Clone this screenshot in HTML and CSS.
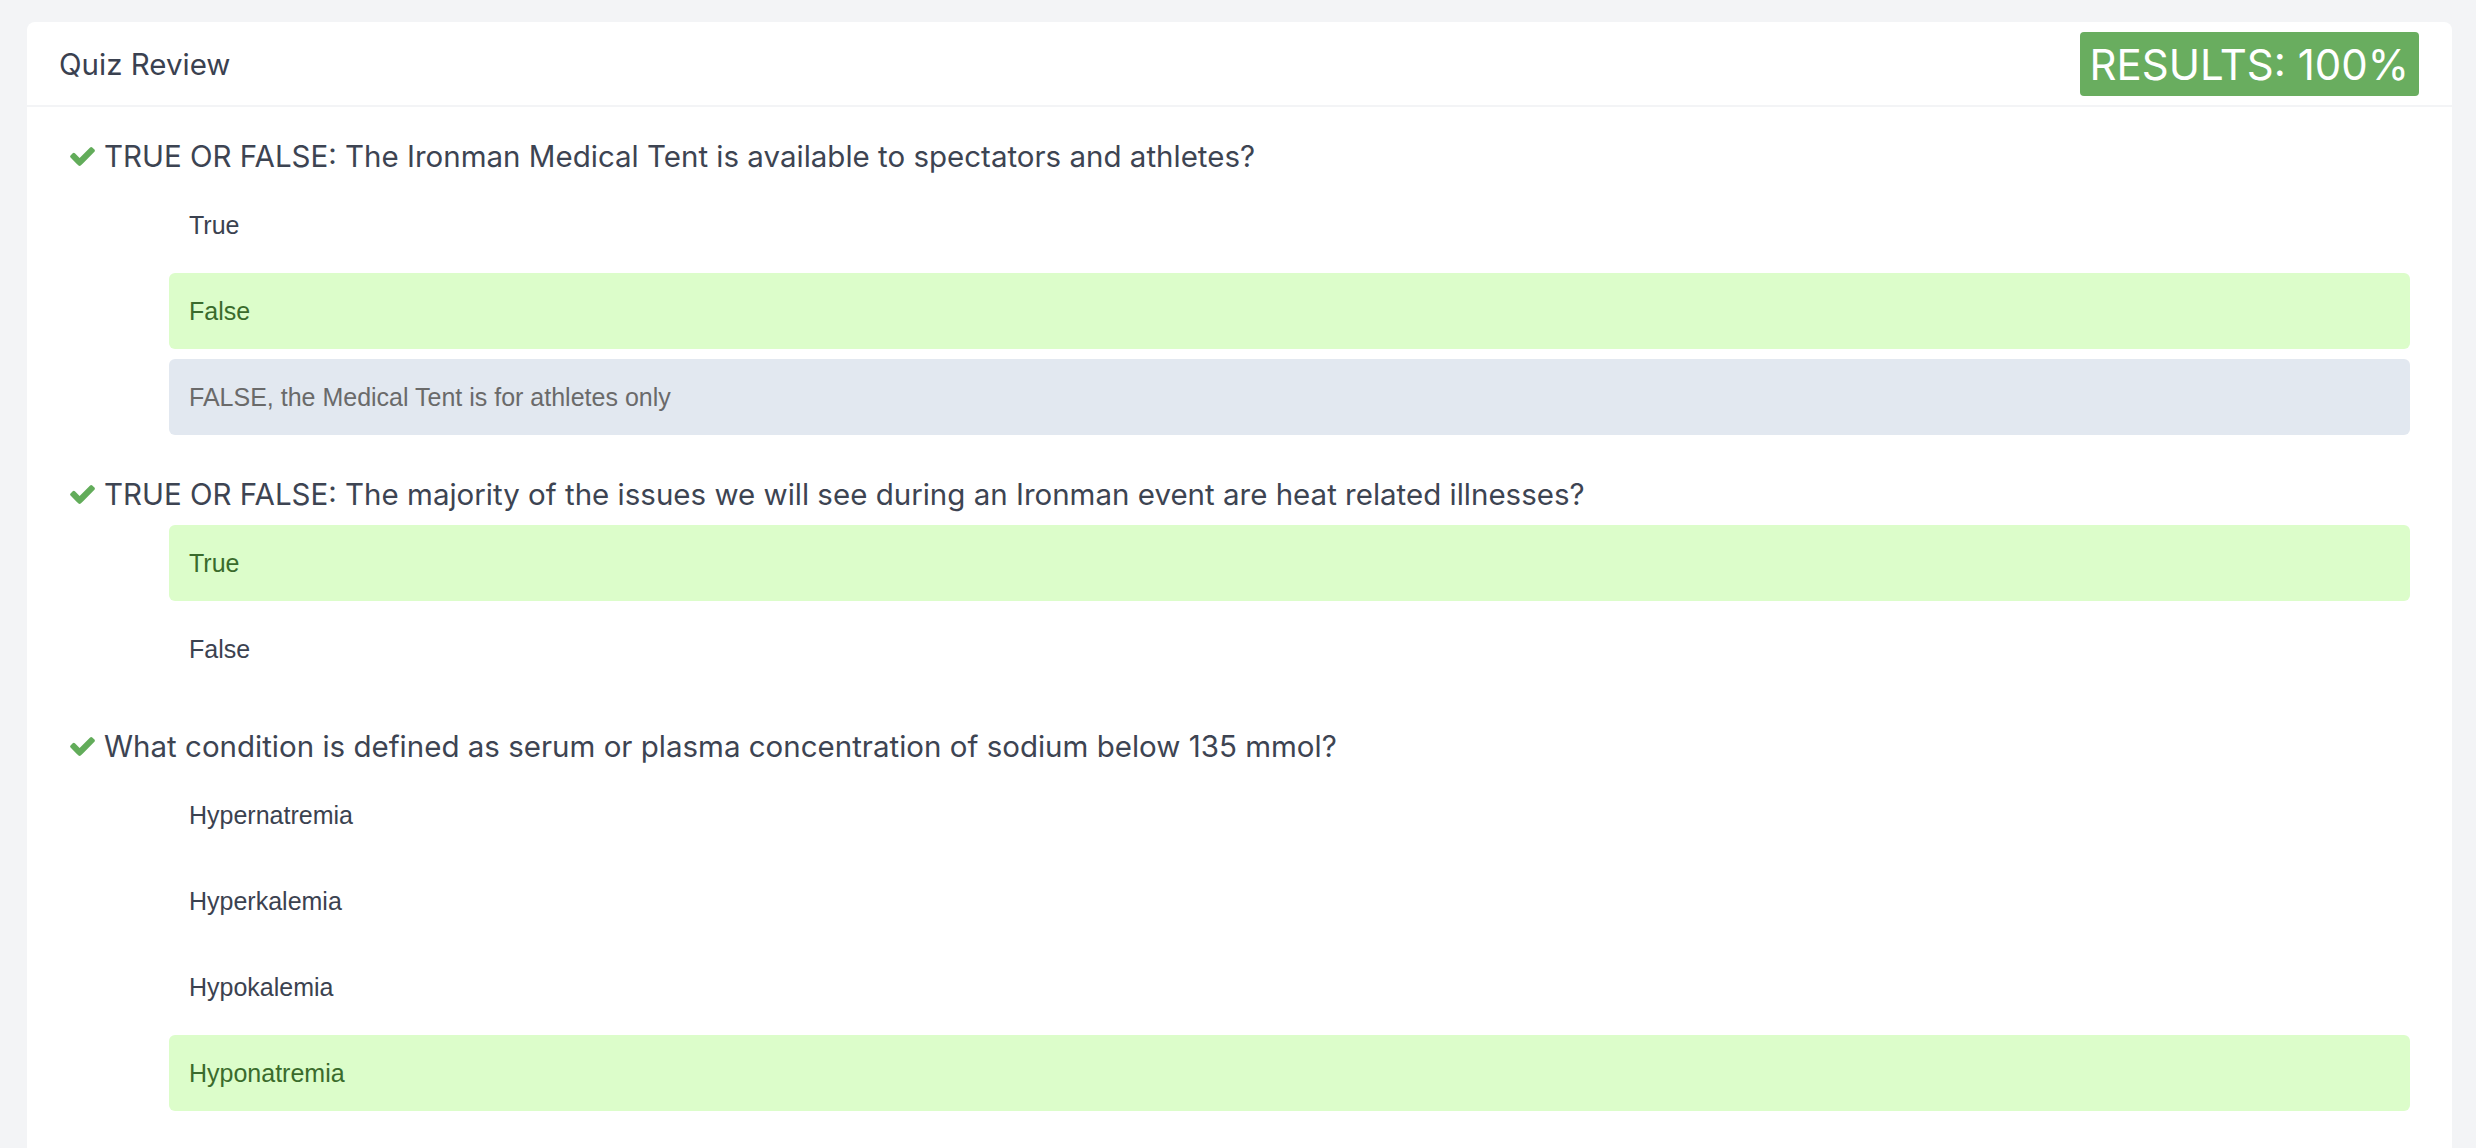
FILE: index.html
```html
<!DOCTYPE html>
<html lang="en">
<head>
<meta charset="utf-8">
<title>Quiz Review</title>
<link rel="stylesheet" href="styles.css">
</head>
<body>
<div class="page">
  <div class="card">
    <div class="card-header">
      <div class="card-title">Quiz Review</div>
      <div class="badge">RESULTS: 100%</div>
    </div>
    <div class="card-body">
      <div class="question-block">
        <div class="question">
          <svg class="check" viewBox="121 334 1550 1188" width="25" height="19"><path d="M1671 566q0 40-28 68l-724 724-136 136q-28 28-68 28t-68-28l-136-136-362-362q-28-28-28-68t28-68l136-136q28-28 68-28t68 28l294 295 656-657q28-28 68-28t68 28l136 136q28 28 28 68z"/></svg>
          <span>TRUE OR FALSE: The Ironman Medical Tent is available to spectators and athletes?</span>
        </div>
        <div class="answers">
          <div class="answer">True</div>
          <div class="answer correct">False</div>
          <div class="answer explanation">FALSE, the Medical Tent is for athletes only</div>
        </div>
      </div>
      <div class="question-block">
        <div class="question">
          <svg class="check" viewBox="121 334 1550 1188" width="25" height="19"><path d="M1671 566q0 40-28 68l-724 724-136 136q-28 28-68 28t-68-28l-136-136-362-362q-28-28-28-68t28-68l136-136q28-28 68-28t68 28l294 295 656-657q28-28 68-28t68 28l136 136q28 28 28 68z"/></svg>
          <span>TRUE OR FALSE: The majority of the issues we will see during an Ironman event are heat related illnesses?</span>
        </div>
        <div class="answers">
          <div class="answer correct">True</div>
          <div class="answer">False</div>
        </div>
      </div>
      <div class="question-block">
        <div class="question">
          <svg class="check" viewBox="121 334 1550 1188" width="25" height="19"><path d="M1671 566q0 40-28 68l-724 724-136 136q-28 28-68 28t-68-28l-136-136-362-362q-28-28-28-68t28-68l136-136q28-28 68-28t68 28l294 295 656-657q28-28 68-28t68 28l136 136q28 28 28 68z"/></svg>
          <span>What condition is defined as serum or plasma concentration of sodium below 135 mmol?</span>
        </div>
        <div class="answers">
          <div class="answer">Hypernatremia</div>
          <div class="answer">Hyperkalemia</div>
          <div class="answer">Hypokalemia</div>
          <div class="answer correct">Hyponatremia</div>
        </div>
      </div>
    </div>
  </div>
</div>
</body>
</html>
```
FILE: styles.css
```css
* { box-sizing: border-box; }
html, body {
  margin: 0;
  padding: 0;
  background: #f3f4f6;
}
.page {
  padding: 22px 24px 0 27px;
  min-height: 1148px;
}
.card {
  background: #ffffff;
  border-radius: 8px 8px 0 0;
  min-height: 1200px;
}
.card-header {
  height: 85px;
  padding: 0 33px 0 32px;
  border-bottom: 2px solid #f3f4f6;
  display: flex;
  align-items: center;
  justify-content: space-between;
}
.card-title {
  font-family: "Inter", sans-serif;
  font-size: 29.5px;
  color: #3a4150;
}
.badge {
  height: 64px;
  padding: 0 10px;
  background: #69ad5f;
  color: #ffffff;
  border-radius: 4px;
  display: flex;
  align-items: center;
  font-family: "Inter", sans-serif;
  font-size: 42px;
  margin-top: 1px;
}
.card-body {
  padding: 27px 42px 40px 43px;
  display: flex;
  flex-direction: column;
  gap: 37px;
}
.question {
  height: 44px;
  display: flex;
  align-items: center;
  gap: 9px;
  margin-bottom: 9px;
  font-family: "Inter", sans-serif;
  font-size: 29.5px;
  color: #3d4452;
}
.check {
  fill: #62ac5a;
  flex: none;
}
.answers {
  margin-left: 99px;
  display: flex;
  flex-direction: column;
  gap: 10px;
}
.answer {
  height: 76px;
  padding: 0 20px;
  display: flex;
  align-items: center;
  border-radius: 6px;
  font-family: "Liberation Sans", Arial, sans-serif;
  font-size: 25px;
  color: #3b4250;
}
.answer.correct {
  background: #dcfdca;
  color: #3a6b2c;
}
.answer.explanation {
  background: #e2e8f0;
  color: #6a6a6a;
}
```
